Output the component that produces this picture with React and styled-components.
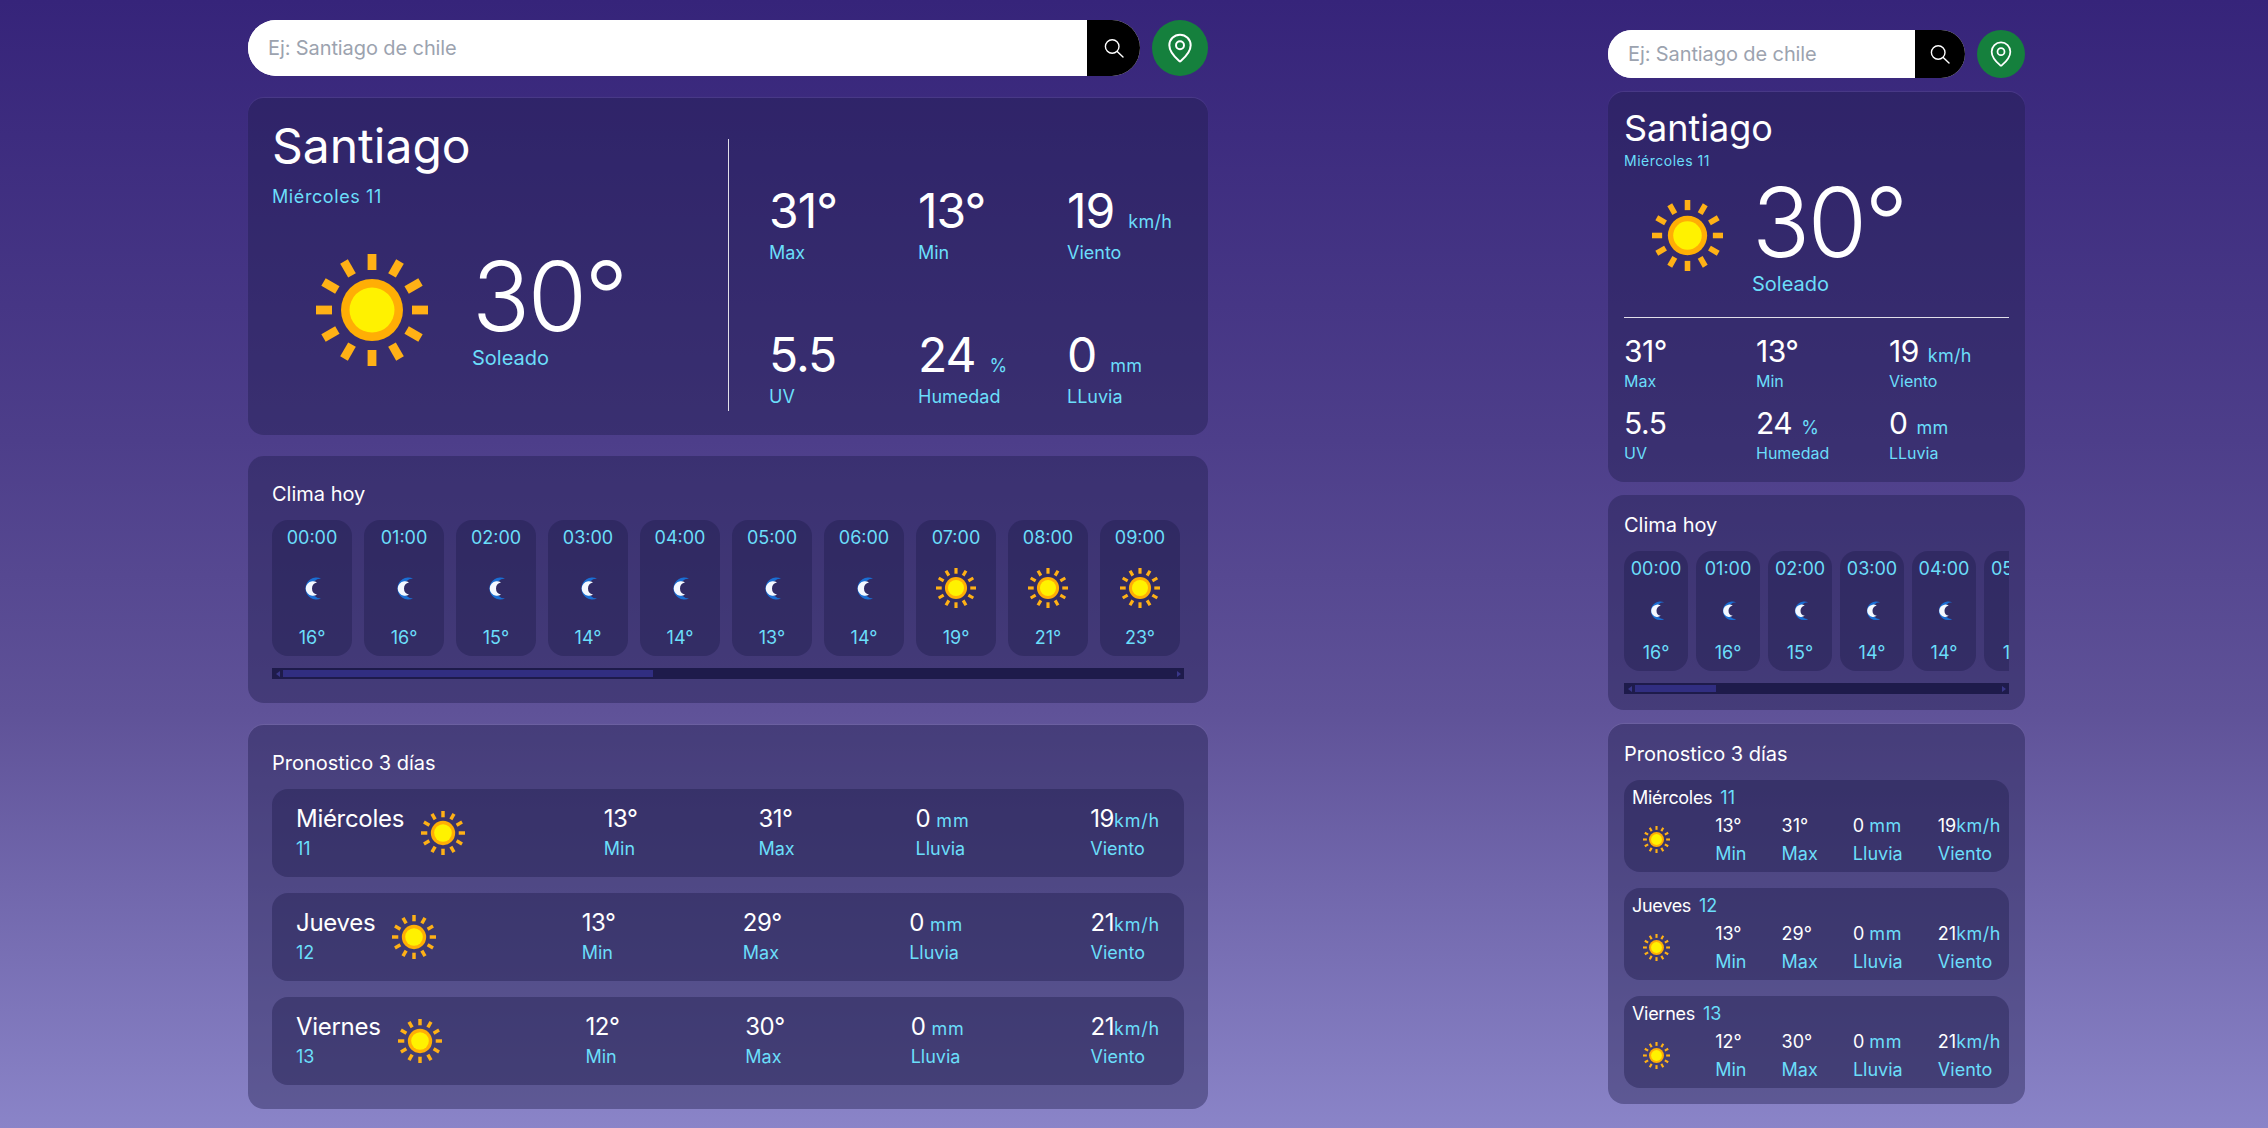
import React from 'react';
import styled, { createGlobalStyle } from 'styled-components';
import { MapPin } from 'lucide-react';

const GlobalStyle = createGlobalStyle`
  html, body {
    margin: 0;
    padding: 0;
  }
  body {
    font-family: 'Inter', 'Noto Sans', sans-serif;
    color: #fff;
    background: linear-gradient(180deg, #36247a 0%, #4d3e8a 39%, #5f5298 63%, #8a84c8 100%);
    min-height: 100vh;
  }
  * { box-sizing: border-box; }
`;

const CYAN = '#6bdefa';

const Page = styled.div`
  display: flex;
  align-items: flex-start;
  gap: 400px;
  padding: 20px 0 19px 248px;
`;

const Column = styled.main`
  display: flex;
  flex-direction: column;
  flex-shrink: 0;
  width: ${p => (p.$compact ? '417px' : '960px')};
  margin-top: ${p => (p.$compact ? '10px' : '0')};
  gap: ${p => (p.$compact ? '13.5px' : '21.5px')};
`;

const SearchRow = styled.div`
  display: flex;
  gap: 12px;
`;

const SearchBox = styled.form`
  flex: 1;
  display: flex;
  height: ${p => (p.$compact ? '48px' : '56px')};
  border-radius: 28px;
  overflow: hidden;
  background: #fff;
`;

const SearchInput = styled.input`
  flex: 1;
  min-width: 0;
  border: 0;
  outline: 0;
  padding: 0 20px;
  font: 400 20px 'Inter', sans-serif;
  letter-spacing: -0.1px;
  color: #111;
  &::placeholder { color: #9ca3af; }
`;

const SearchButton = styled.button`
  display: flex;
  align-items: center;
  justify-content: center;
  border: 0;
  padding: 0;
  width: ${p => (p.$compact ? '50px' : '53px')};
  background: #000;
  color: #fff;
`;

const LocateButton = styled.button`
  display: flex;
  align-items: center;
  justify-content: center;
  flex-shrink: 0;
  border: 0;
  padding: 0;
  width: ${p => (p.$compact ? '48px' : '56px')};
  height: ${p => (p.$compact ? '48px' : '56px')};
  border-radius: 50%;
  background: #15803d;
  color: #fff;
`;

const Card = styled.section`
  border-radius: 16px;
  padding: ${p => (p.$compact ? '16px' : '24px')};
  background: rgba(30, 27, 75, 0.4);
  box-shadow: ${p => (p.$lit ? '0 -1px 1px rgba(255, 255, 255, 0.08)' : 'none')};
`;

const CurrentCard = styled(Card)`
  display: ${p => (p.$compact ? 'block' : 'grid')};
  grid-template-columns: 456px 1fr;
`;

const City = styled.h1`
  margin: 0;
  font-weight: 400;
  font-size: ${p => (p.$compact ? '36px' : '48px')};
  line-height: ${p => (p.$compact ? '40px' : '48px')};
`;

const DateLine = styled.div`
  color: ${CYAN};
  font-size: ${p => (p.$compact ? '14px' : '18px')};
  line-height: ${p => (p.$compact ? '20px' : '28px')};
  letter-spacing: ${p => (p.$compact ? '0.5px' : '0.6px')};
  margin-top: ${p => (p.$compact ? '3px' : '13px')};
`;

const NowRow = styled.div`
  display: flex;
  align-items: center;
  margin-top: ${p => (p.$compact ? '3px' : '37px')};
  padding-left: ${p => (p.$compact ? '28px' : '44px')};
  gap: ${p => (p.$compact ? '29px' : '44px')};
`;

const BigTemp = styled.div`
  font-weight: 300;
  font-size: 96px;
  line-height: 96px;
  letter-spacing: -2.5px;
`;

const Condition = styled.div`
  color: ${CYAN};
  font-size: 20px;
  line-height: 28px;
`;

const StatsPanel = styled.div`
  border-left: ${p => (p.$compact ? '0' : '1px solid rgba(255, 255, 255, 0.85)')};
  border-top: ${p => (p.$compact ? '1px solid rgba(255, 255, 255, 0.85)' : '0')};
  margin-top: ${p => (p.$compact ? '19px' : '17px')};
  padding: ${p => (p.$compact ? '15px 0 1px' : '48px 0 0 40px')};
  display: grid;
  grid-template-columns: ${p => (p.$compact ? '132px 133px 1fr' : 'repeat(3, 149px)')};
  row-gap: ${p => (p.$compact ? '12px' : '64px')};
`;

const StatValue = styled.div`
  font-size: ${p => (p.$compact ? '30px' : '48px')};
  line-height: ${p => (p.$compact ? '36px' : '48px')};
  letter-spacing: ${p => (p.$compact ? '-0.5px' : '-1px')};
  white-space: nowrap;
`;

const StatUnit = styled.span`
  color: ${CYAN};
  font-size: 18px;
  line-height: 1;
  letter-spacing: 0.3px;
  margin-left: ${p => (p.$compact ? '9px' : '14px')};
`;

const StatLabel = styled.div`
  color: ${CYAN};
  font-size: ${p => (p.$compact ? '16px' : '18px')};
  line-height: ${p => (p.$compact ? '24px' : '28px')};
  margin-top: ${p => (p.$compact ? '0' : '4px')};
`;

const SectionTitle = styled.h2`
  margin: 0 0 12px;
  font-weight: 400;
  font-size: 20px;
  line-height: 28px;
`;

const HourStrip = styled.div`
  display: flex;
  gap: ${p => (p.$compact ? '8px' : '12px')};
  overflow: hidden;
`;

const HourTile = styled.div`
  flex: 0 0 ${p => (p.$compact ? '64px' : '80px')};
  height: ${p => (p.$compact ? '120px' : '136px')};
  display: flex;
  flex-direction: column;
  align-items: center;
  justify-content: space-between;
  padding: 4px 0;
  border-radius: 16px;
  background: rgba(30, 27, 75, 0.4);
  color: ${CYAN};
  font-size: 18px;
  line-height: 28px;
`;

const ScrollTrack = styled.div`
  display: flex;
  align-items: center;
  height: 11px;
  margin-top: 12px;
  background: #1e1b4b;
`;

const ScrollArrow = styled.span`
  flex: 0 0 11px;
  display: flex;
  justify-content: center;
  &::before {
    content: '';
    border-style: solid;
    border-color: transparent;
    border-width: 3.5px ${p => (p.$right ? '0' : '4px')} 3.5px ${p => (p.$right ? '4px' : '0')};
    border-left-color: ${p => (p.$right ? '#3a3788' : 'transparent')};
    border-right-color: ${p => (p.$right ? 'transparent' : '#3a3788')};
  }
`;

const ScrollRail = styled.div`
  flex: 1;
`;

const ScrollThumb = styled.div`
  width: ${p => p.$size}%;
  height: 7px;
  background: #312e81;
`;

const DayList = styled.div`
  display: flex;
  flex-direction: column;
  gap: 16px;
`;

const DayRow = styled.div`
  display: flex;
  flex-direction: ${p => (p.$compact ? 'column' : 'row')};
  align-items: ${p => (p.$compact ? 'stretch' : 'center')};
  justify-content: space-between;
  height: ${p => (p.$compact ? '92px' : '88px')};
  padding: ${p => (p.$compact ? '4px 8px' : '0 24px')};
  border-radius: 16px;
  background: rgba(30, 27, 75, 0.4);
`;

const DayHead = styled.div`
  display: flex;
  align-items: center;
  flex-shrink: 0;
`;

const DayName = styled.div`
  font-size: ${p => (p.$compact ? '18px' : '24px')};
  line-height: ${p => (p.$compact ? '28px' : '32px')};
  letter-spacing: -0.3px;
`;

const DayNumber = styled.div`
  color: ${CYAN};
  font-size: 18px;
  line-height: 28px;
  margin-left: ${p => (p.$compact ? '8px' : '0')};
`;

const DaySunBox = styled.div`
  display: flex;
  justify-content: center;
  width: ${p => (p.$compact ? '48px' : 'auto')};
  margin: ${p => (p.$compact ? '0' : '0 18px 0 17px')};
`;

const DayStats = styled.div`
  display: flex;
  align-items: center;
  justify-content: space-between;
`;

const DayStat = styled.div`
  font-size: 18px;
  line-height: 28px;
  color: ${CYAN};
  white-space: nowrap;
`;

const DayValue = styled.div`
  color: #fff;
  font-size: ${p => (p.$compact ? '18px' : '24px')};
  line-height: ${p => (p.$compact ? '28px' : '32px')};
  letter-spacing: ${p => (p.$compact ? '0' : '-0.5px')};
`;

const DayUnit = styled.span`
  color: ${CYAN};
  font-size: 18px;
  line-height: 1;
  letter-spacing: ${p => (p.$compact ? '0.5px' : '0.8px')};
`;

const RAYS = Array.from({ length: 12 }, (_, i) => i * 30);

const Sun = ({ size }) => (
  <svg width={size} height={size} viewBox="-56 -56 112 112" style={{ flexShrink: 0, display: 'block' }}>
    {RAYS.map(a => (
      <rect key={a} x="-4.4" y="-56" width="8.8" height="16" fill="#ffb116" transform={`rotate(${a})`} />
    ))}
    <circle r="31" fill="#ffae05" />
    <circle r="22.5" fill="#fff200" />
  </svg>
);

const Moon = ({ width }) => (
  <svg width={width} height={width * 1.15} viewBox="0 0 20 23" style={{ flexShrink: 0, display: 'block' }}>
    <path d="M19 1.5A11 11 0 1 0 19 21.5A9.8 9.8 0 0 1 19 1.5Z" fill="#1a6fd4" />
    <path d="M15 5.5A7.24 7.24 0 1 0 15 17.5A6.1 6.1 0 0 1 15 5.5Z" fill="#f4f8ff" />
  </svg>
);

const SearchGlyph = () => (
  <svg width="20" height="20" viewBox="0 0 20 20" fill="none" stroke="currentColor" strokeWidth="1.4" strokeLinecap="round">
    <circle cx="8.2" cy="8.5" r="6.8" />
    <path d="M13.2 13.4 19 19" />
  </svg>
);

const temps = [16, 16, 15, 14, 14, 13, 14, 19, 21, 23, 25, 27, 28, 29, 30, 31, 31, 30, 28, 26, 23, 21, 19, 18];
const hours = temps.map((temp, i) => ({
  label: `${String(i).padStart(2, '0')}:00`,
  temp,
  night: i < 7 || i > 20,
}));

const days = [
  { name: 'Miércoles', num: 11, min: 13, max: 31, wind: 19 },
  { name: 'Jueves', num: 12, min: 13, max: 29, wind: 21 },
  { name: 'Viernes', num: 13, min: 12, max: 30, wind: 21 },
];

const stats = [
  { value: '31°', label: 'Max' },
  { value: '13°', label: 'Min' },
  { value: '19', unit: 'km/h', label: 'Viento' },
  { value: '5.5', label: 'UV' },
  { value: '24', unit: '%', label: 'Humedad' },
  { value: '0', unit: 'mm', label: 'LLuvia' },
];

const ForecastRow = ({ day, compact }) => {
  const figures = (
    <>
      <DayStat>
        <DayValue $compact={compact}>{day.min}°</DayValue>Min
      </DayStat>
      <DayStat>
        <DayValue $compact={compact}>{day.max}°</DayValue>Max
      </DayStat>
      <DayStat>
        <DayValue $compact={compact}>0 <DayUnit $compact={compact}>mm</DayUnit></DayValue>Lluvia
      </DayStat>
      <DayStat>
        <DayValue $compact={compact}>{day.wind}<DayUnit $compact={compact}>km/h</DayUnit></DayValue>Viento
      </DayStat>
    </>
  );

  if (compact) {
    return (
      <DayRow $compact>
        <DayHead>
          <DayName $compact>{day.name}</DayName>
          <DayNumber $compact>{day.num}</DayNumber>
        </DayHead>
        <DayStats>
          <DaySunBox $compact><Sun size={27} /></DaySunBox>
          {figures}
        </DayStats>
      </DayRow>
    );
  }

  return (
    <DayRow>
      <DayHead>
        <div>
          <DayName>{day.name}</DayName>
          <DayNumber>{day.num}</DayNumber>
        </div>
        <DaySunBox><Sun size={44} /></DaySunBox>
      </DayHead>
      {figures}
    </DayRow>
  );
};

const WeatherColumn = ({ compact }) => (
  <Column $compact={compact}>
    <SearchRow>
      <SearchBox $compact={compact}>
        <SearchInput placeholder="Ej: Santiago de chile" />
        <SearchButton type="button" $compact={compact}><SearchGlyph /></SearchButton>
      </SearchBox>
      <LocateButton type="button" $compact={compact}>
        <MapPin size={compact ? 28 : 32} strokeWidth={1.5} />
      </LocateButton>
    </SearchRow>

    <CurrentCard $compact={compact} $lit>
      <div>
        <City $compact={compact}>Santiago</City>
        <DateLine $compact={compact}>Miércoles 11</DateLine>
        <NowRow $compact={compact}>
          <Sun size={compact ? 71 : 112} />
          <div>
            <BigTemp>30°</BigTemp>
            <Condition>Soleado</Condition>
          </div>
        </NowRow>
      </div>
      <StatsPanel $compact={compact}>
        {stats.map(s => (
          <div key={s.label}>
            <StatValue $compact={compact}>
              {s.value}
              {s.unit && <StatUnit $compact={compact}>{s.unit}</StatUnit>}
            </StatValue>
            <StatLabel $compact={compact}>{s.label}</StatLabel>
          </div>
        ))}
      </StatsPanel>
    </CurrentCard>

    <Card $compact={compact}>
      <SectionTitle>Clima hoy</SectionTitle>
      <HourStrip $compact={compact}>
        {hours.map(h => (
          <HourTile key={h.label} $compact={compact}>
            <span>{h.label}</span>
            {h.night
              ? <Moon width={compact ? 17 : 20} />
              : <Sun size={compact ? 32 : 40} />}
            <span>{h.temp}°</span>
          </HourTile>
        ))}
      </HourStrip>
      <ScrollTrack>
        <ScrollArrow />
        <ScrollRail>
          <ScrollThumb $size={compact ? 22.3 : 41.6} />
        </ScrollRail>
        <ScrollArrow $right />
      </ScrollTrack>
    </Card>

    <Card $compact={compact} $lit>
      <SectionTitle>Pronostico 3 días</SectionTitle>
      <DayList>
        {days.map(d => <ForecastRow key={d.name} day={d} compact={compact} />)}
      </DayList>
    </Card>
  </Column>
);

export default function App() {
  return (
    <>
      <GlobalStyle />
      <Page>
        <WeatherColumn />
        <WeatherColumn compact />
      </Page>
    </>
  );
}
